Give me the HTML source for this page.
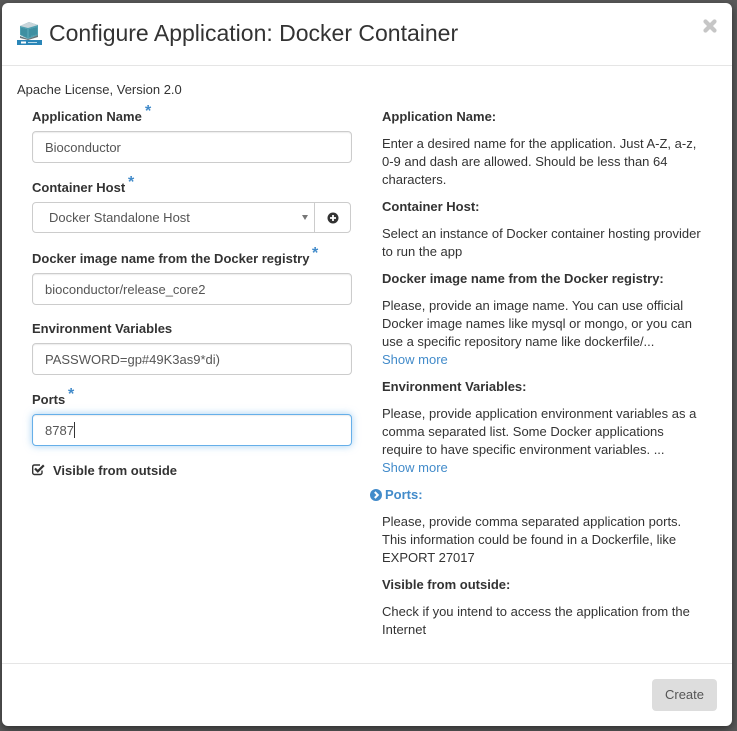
<!DOCTYPE html>
<html><head><meta charset="utf-8">
<style>
html,body{margin:0;padding:0;width:737px;height:731px;overflow:hidden;background:#5a5a5a;font-family:"Liberation Sans",Arial,sans-serif;font-size:13px;color:#333}
#m{position:absolute;left:2px;top:3px;width:730px;height:723px;background:#fff;border-radius:6px;box-shadow:0 3px 9px rgba(0,0,0,.5)}
.a{position:absolute;white-space:nowrap;line-height:20px}
.l{font-weight:700;letter-spacing:0}
.s{color:#428bca;font-size:16px;font-weight:700;position:absolute;line-height:14px}
.i{position:absolute;left:32px;width:318px;height:30px;border:1px solid #ccc;border-radius:4px;background:#fff;color:#555;line-height:32px;text-indent:12px;box-shadow:inset 0 1px 1px rgba(0,0,0,.075)}
.r{position:absolute;left:382px;white-space:nowrap;line-height:18px}
.b{font-weight:700}
a{color:#428bca;text-decoration:none}
.hr{position:absolute;height:1px;background:#e5e5e5;left:2px;width:730px}
</style></head><body>
<div id="m"></div>
<div class="hr" style="top:65px"></div>
<div class="hr" style="top:663px"></div>

<svg style="position:absolute;left:17px;top:22px" width="25" height="23" viewBox="0 0 25 23">
<path d="M3 4 L12 0 L21 3 L21 13 L11 17 L3 13Z" fill="#4f9fb0"/>
<path d="M3 4 L12 0 L21 3 L11 6Z" fill="#c9d5da"/>
<path d="M5 6v7M7 6.500v8M9 7v8M13 7v8M15 6.500v7M17 6v7M19 5.500v7" stroke="#2f7f92" stroke-width="1"/>
<path d="M3 14 L11 17 L21 13 L21 15 L11 18 L3 16Z" fill="#66757a"/>
<rect x="0" y="18" width="25" height="5" fill="#2a86b8"/>
<rect x="4" y="19.500" width="5" height="2" fill="#fff"/>
<rect x="11" y="20" width="9" height="1" fill="#b9dcec"/>
</svg>
<div class="a" style="left:49px;top:17px;font-size:23px;line-height:32px;color:#333">Configure Application: Docker Container</div>
<svg style="position:absolute;left:702px;top:18px" width="16" height="16" viewBox="0 0 16 16"><path d="M3.500 3.500 L12.500 12.500 M12.500 3.500 L3.500 12.500" stroke="#c6c6c6" stroke-width="4.200" stroke-linecap="round"/></svg>

<div class="a" style="left:17px;top:80px">Apache License, Version 2.0</div>

<div class="a l" style="left:32px;top:107px">Application Name</div>
<div class="s" style="left:145px;top:105px">*</div>
<div class="i" style="top:131px">Bioconductor</div>

<div class="a l" style="left:32px;top:178px">Container Host</div>
<div class="s" style="left:128px;top:176px">*</div>
<div style="position:absolute;left:32px;top:202px;width:317px;height:29px;border:1px solid #ccc;border-radius:4px;background:#fff"></div>
<div style="position:absolute;left:314px;top:203px;width:1px;height:29px;background:#ccc"></div>
<div class="a" style="left:49px;top:208px;color:#555">Docker Standalone Host</div>
<div style="position:absolute;left:302px;top:215px;width:0;height:0;border-left:3px solid transparent;border-right:3px solid transparent;border-top:5px solid #777"></div>
<svg style="position:absolute;left:327px;top:212px" width="12" height="12" viewBox="0 0 12 12"><circle cx="6" cy="6" r="5.500" fill="#333"/><path d="M3 6h6M6 3v6" stroke="#fff" stroke-width="1.800"/></svg>

<div class="a l" style="left:32px;top:249px">Docker image name from the Docker registry</div>
<div class="s" style="left:312px;top:247px">*</div>
<div class="i" style="top:273px">bioconductor/release_core2</div>

<div class="a l" style="left:32px;top:319px">Environment Variables</div>
<div class="i" style="top:343px">PASSWORD=gp#49K3as9*di)</div>

<div class="a l" style="left:32px;top:390px">Ports</div>
<div class="s" style="left:68px;top:388px">*</div>
<div class="i" style="top:414px;border-color:#66afe9;box-shadow:inset 0 1px 1px rgba(0,0,0,.075),0 0 8px rgba(102,175,233,.6)">8787<span style="display:inline-block;width:1px;height:16px;background:#333;vertical-align:-3px;text-indent:0"></span></div>

<svg style="position:absolute;left:32px;top:463px" width="13" height="13" viewBox="0 0 13 13"><path d="M10 7.500v2A1.800 1.800 0 0 1 8.200 11.500H2.300A1.800 1.800 0 0 1 .7 9.500V3.800A1.800 1.800 0 0 1 2.300 2H8" fill="none" stroke="#333" stroke-width="1.400"/><path d="M3 5.500 L5.800 8.300 L11.800 2.300" fill="none" stroke="#333" stroke-width="2.200"/></svg>
<div class="a l" style="left:53px;top:461px">Visible from outside</div>

<div class="r b" style="top:108px">Application Name:</div>
<div class="r" style="top:135px">Enter a desired name for the application. Just A-Z, a-z,<br>0-9 and dash are allowed. Should be less than 64<br>characters.</div>
<div class="r b" style="top:198px">Container Host:</div>
<div class="r" style="top:225px">Select an instance of Docker container hosting provider<br>to run the app</div>
<div class="r b" style="top:270px">Docker image name from the Docker registry:</div>
<div class="r" style="top:297px">Please, provide an image name. You can use official<br>Docker image names like mysql or mongo, or you can<br>use a specific repository name like dockerfile/...<br><a>Show more</a></div>
<div class="r b" style="top:378px">Environment Variables:</div>
<div class="r" style="top:405px">Please, provide application environment variables as a<br>comma separated list. Some Docker applications<br>require to have specific environment variables. ...<br><a>Show more</a></div>
<svg style="position:absolute;left:370px;top:489px" width="12" height="12" viewBox="0 0 12 12"><circle cx="6" cy="6" r="6" fill="#428bca"/><path d="M4.800 3 L7.800 6 L4.800 9" fill="none" stroke="#fff" stroke-width="2"/></svg>
<div class="r b" style="left:385px;top:486px;color:#428bca">Ports:</div>
<div class="r" style="top:513px">Please, provide comma separated application ports.<br>This information could be found in a Dockerfile, like<br>EXPORT 27017</div>
<div class="r b" style="top:576px">Visible from outside:</div>
<div class="r" style="top:603px">Check if you intend to access the application from the<br>Internet</div>

<div style="position:absolute;left:652px;top:679px;width:65px;height:32px;background:#ddd;border-radius:4px;color:#555;text-align:center;line-height:32px;padding-top:0"><span style="position:relative;top:0">Create</span></div>
</body></html>
